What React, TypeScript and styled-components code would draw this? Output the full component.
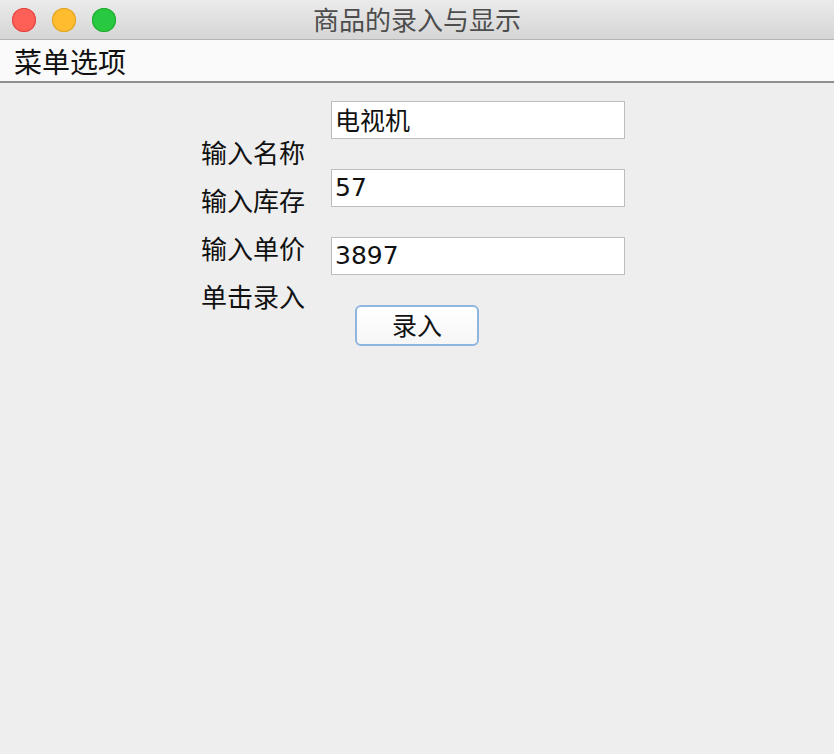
import React from "react";
import styled, { createGlobalStyle } from "styled-components";

const Global = createGlobalStyle`
  html, body { margin: 0; padding: 0; background: #eeeeee; }
  body { font-family: "Noto Sans CJK SC", "Noto Sans", sans-serif; }
`;

const Window = styled.div`
  width: 834px;
  height: 754px;
  display: flex;
  flex-direction: column;
  background: #eeeeee;
`;

const TitleBar = styled.div`
  height: 39px;
  flex: none;
  display: flex;
  align-items: center;
  position: relative;
  background: linear-gradient(#ebebeb, #d5d5d5);
  border-bottom: 1px solid #b4b4b4;
`;

const Lights = styled.div`
  display: flex;
  gap: 16px;
  padding-left: 12px;
`;

const Light = styled.span<{ $c: string; $b: string }>`
  width: 24px;
  height: 24px;
  border-radius: 50%;
  background: ${(p) => p.$c};
  box-shadow: inset 0 0 0 1px ${(p) => p.$b};
`;

const Title = styled.div`
  position: absolute;
  left: 0;
  right: 0;
  top: 0;
  height: 39px;
  line-height: 37px;
  text-align: center;
  font-size: 26px;
  color: #4d4d4d;
  pointer-events: none;
`;

const MenuBar = styled.div`
  height: 41px;
  flex: none;
  background: #fafafa;
  border-bottom: 2px solid #8f8f8f;
  display: flex;
  align-items: center;
  padding-left: 14px;
  font-size: 28px;
  color: #111;
`;

const Body = styled.div`
  display: flex;
  padding-left: 201px;
`;

const LabelCol = styled.div`
  width: 130px;
  display: flex;
  flex-direction: column;
  padding-top: 45px;
`;

const Label = styled.div`
  height: 48px;
  line-height: 48px;
  font-size: 26px;
  color: #111;
  white-space: nowrap;
`;

const FieldCol = styled.div`
  display: flex;
  flex-direction: column;
  gap: 30px;
  padding-top: 18px;
`;

const Field = styled.input`
  box-sizing: border-box;
  width: 294px;
  height: 38px;
  margin: 0;
  padding: 0 3px 2px;
  border: 1px solid #bdbdbd;
  background: #fff;
  font-family: "DejaVu Sans", "Noto Sans CJK SC", sans-serif;
  font-size: 25px;
  color: #111;
  outline: none;
`;

const Button = styled.button`
  box-sizing: border-box;
  width: 124px;
  height: 41px;
  margin-left: 24px;
  padding: 0 0 3px;
  border: 2px solid #8fb6e0;
  border-radius: 6px;
  background: linear-gradient(#ffffff, #f6f6f6);
  font-family: "Noto Sans CJK SC", "Noto Sans", sans-serif;
  font-size: 25px;
  color: #111;
  line-height: 34px;
`;

export default function App() {
  return (
    <>
      <Global />
      <Window>
        <TitleBar>
          <Lights>
            <Light $c="#fe5f57" $b="#e1443f" />
            <Light $c="#febc2e" $b="#dea123" />
            <Light $c="#28c840" $b="#1eaa2f" />
          </Lights>
          <Title>商品的录入与显示</Title>
        </TitleBar>
        <MenuBar>菜单选项</MenuBar>
        <Body>
          <LabelCol>
            <Label>输入名称</Label>
            <Label>输入库存</Label>
            <Label>输入单价</Label>
            <Label>单击录入</Label>
          </LabelCol>
          <FieldCol>
            <Field defaultValue="电视机" />
            <Field defaultValue="57" />
            <Field defaultValue="3897" />
            <Button>录入</Button>
          </FieldCol>
        </Body>
      </Window>
    </>
  );
}
